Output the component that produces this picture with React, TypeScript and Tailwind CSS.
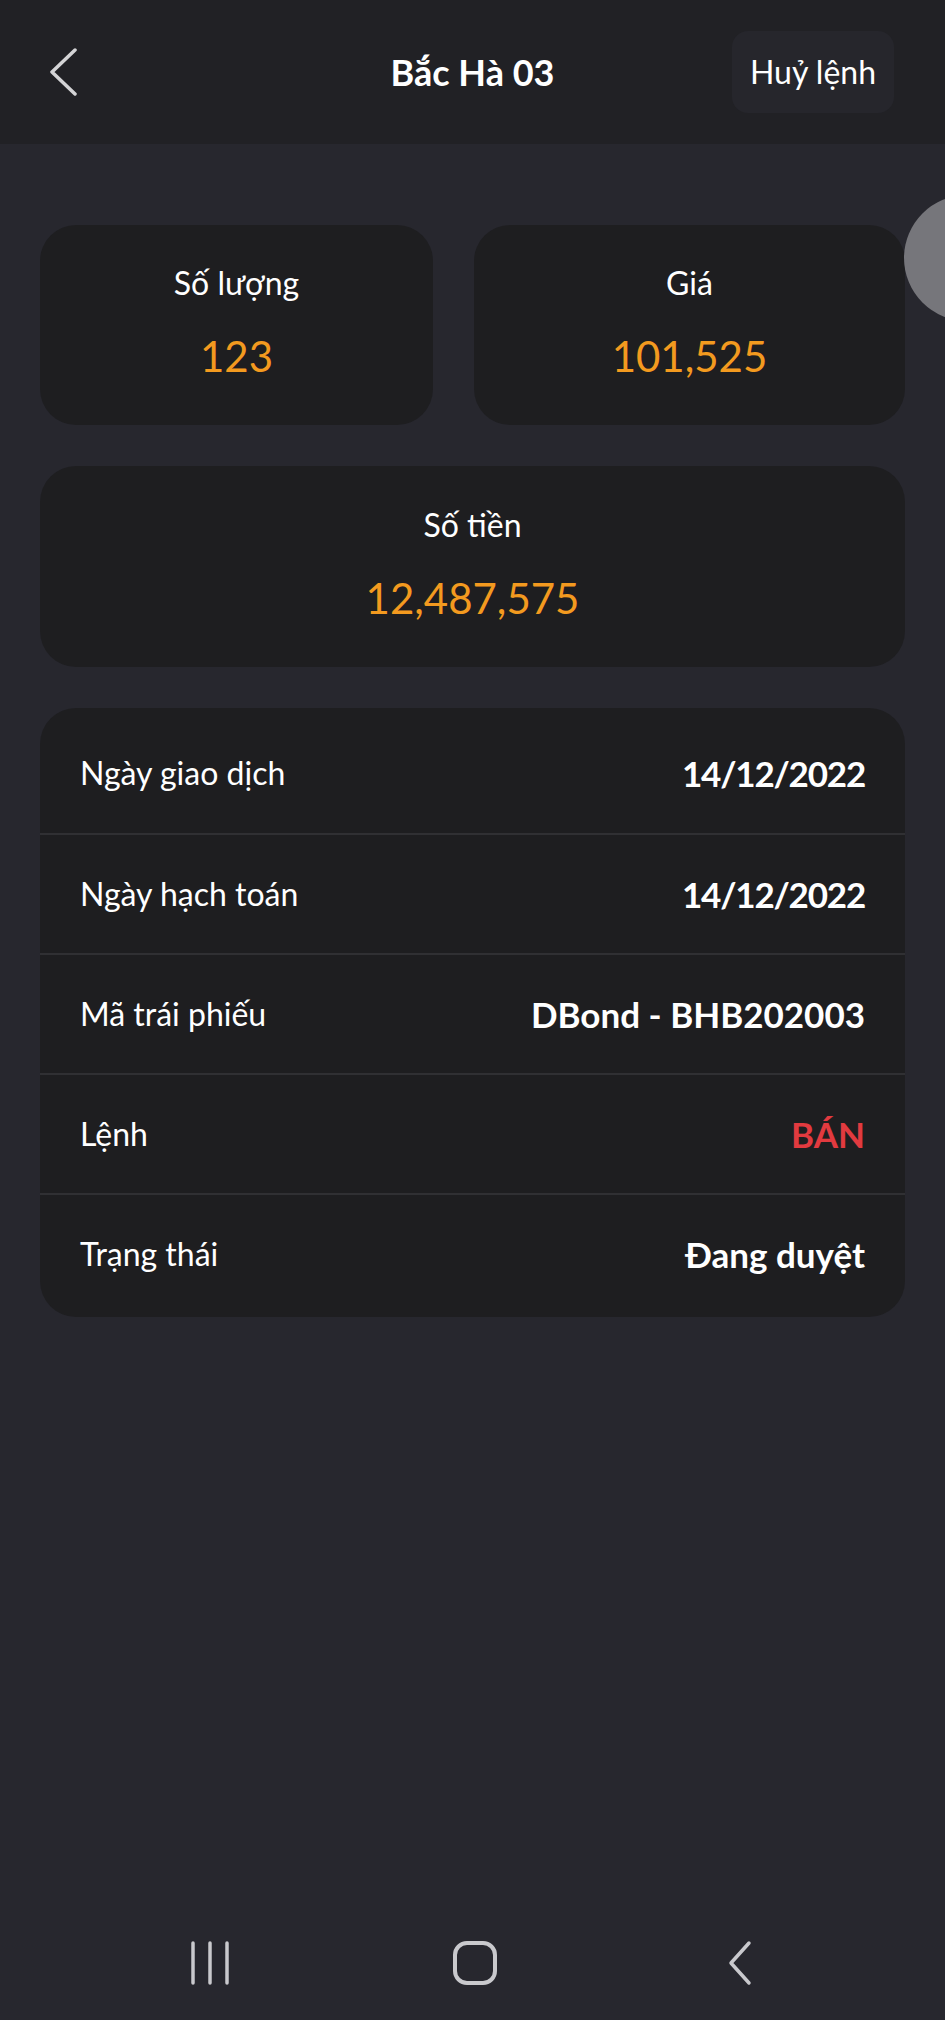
import React from "react";

const rows: { label: string; value: string; red?: boolean; tight?: boolean }[] = [
  { label: "Ngày giao dịch", value: "14/12/2022", tight: true },
  { label: "Ngày hạch toán", value: "14/12/2022", tight: true },
  { label: "Mã trái phiếu", value: "DBond - BHB202003" },
  { label: "Lệnh", value: "BÁN", red: true },
  { label: "Trạng thái", value: "Đang duyệt" },
];

export default function App() {
  return (
    <div className="relative w-[945px] min-h-[2020px] overflow-hidden bg-[#27272e] flex flex-col [font-family:Lato,'Noto_Sans',sans-serif] text-white">
      {/* Header */}
      <div className="h-[144px] bg-[#212125] grid grid-cols-[1fr_auto_1fr] items-center">
        <div className="pl-[49px] flex items-center">
          <svg width="30" height="48" viewBox="0 0 30 48" fill="none">
            <polyline points="26,2 3,24 26,46" stroke="#d4d4d6" strokeWidth="3.5" strokeLinecap="round" strokeLinejoin="round" />
          </svg>
        </div>
        <div className="text-[36px] font-bold leading-none">Bắc Hà 03</div>
        <div className="flex justify-end pr-[51px]">
          <div className="w-[162px] h-[82px] rounded-[16px] bg-[#26262c] flex items-center justify-center text-[32px] leading-none">
            Huỷ lệnh
          </div>
        </div>
      </div>

      {/* Content */}
      <div className="flex-1 px-[40px] pt-[81px] flex flex-col gap-[41px]">
        <div className="flex gap-[41px]">
          <div className="w-[393px] h-[200px] rounded-[36px] bg-[#1e1e20] flex flex-col items-center pt-[38px] gap-[28px]">
            <div className="text-[32px] leading-[40px]">Số lượng</div>
            <div className="text-[42px] leading-[50px] text-[#f39a1f]">123</div>
          </div>
          <div className="flex-1 h-[200px] rounded-[36px] bg-[#1e1e20] flex flex-col items-center pt-[38px] gap-[28px]">
            <div className="text-[32px] leading-[40px]">Giá</div>
            <div className="text-[42px] leading-[50px] text-[#f39a1f]">101,525</div>
          </div>
        </div>

        <div className="h-[201px] rounded-[36px] bg-[#1e1e20] flex flex-col items-center pt-[39px] gap-[28px]">
          <div className="text-[32px] leading-[40px]">Số tiền</div>
          <div className="text-[42px] leading-[50px] text-[#f39a1f]">12,487,575</div>
        </div>

        <div className="rounded-[36px] bg-[#1e1e20] pt-[5px] pb-[4px]">
          {rows.map((r, i) => (
            <div
              key={r.label}
              className={`h-[120px] px-[40px] flex items-center justify-between ${i > 0 ? "border-t-2 border-[#303033]" : ""}`}
            >
              <div className="text-[32px] leading-none">{r.label}</div>
              <div
                className={`text-[35px] font-bold leading-none ${r.tight ? "tracking-[-1.2px]" : "tracking-[0px]"} ${r.red ? "text-[#e23a3f]" : "text-white"}`}
              >
                {r.value}
              </div>
            </div>
          ))}
        </div>
      </div>

      {/* Bottom nav */}
      <div className="h-[115px] flex items-center">
        <div className="flex items-center">
          <div className="ml-[190px] w-[40px] flex">
            <svg width="40" height="44" viewBox="0 0 40 44" fill="none">
              <line x1="3" y1="2" x2="3" y2="42" stroke="#c9c9cd" strokeWidth="3.5" strokeLinecap="round" />
              <line x1="20" y1="2" x2="20" y2="42" stroke="#c9c9cd" strokeWidth="3.5" strokeLinecap="round" />
              <line x1="37" y1="2" x2="37" y2="42" stroke="#c9c9cd" strokeWidth="3.5" strokeLinecap="round" />
            </svg>
          </div>
          <div className="ml-[222px] w-[46px] flex">
            <svg width="46" height="46" viewBox="0 0 46 46" fill="none">
              <rect x="3" y="3" width="40" height="40" rx="12" stroke="#c9c9cd" strokeWidth="4" />
            </svg>
          </div>
          <div className="ml-[229px] w-[26px] flex">
            <svg width="26" height="46" viewBox="0 0 26 46" fill="none">
              <polyline points="22,3 4,23 22,43" stroke="#c9c9cd" strokeWidth="3.5" strokeLinecap="round" strokeLinejoin="round" />
            </svg>
          </div>
        </div>
      </div>

      {/* Floating gray circle at right edge */}
      <div className="absolute left-[904px] top-[195px] w-[126px] h-[126px] rounded-full bg-[#76767b]" />
    </div>
  );
}
